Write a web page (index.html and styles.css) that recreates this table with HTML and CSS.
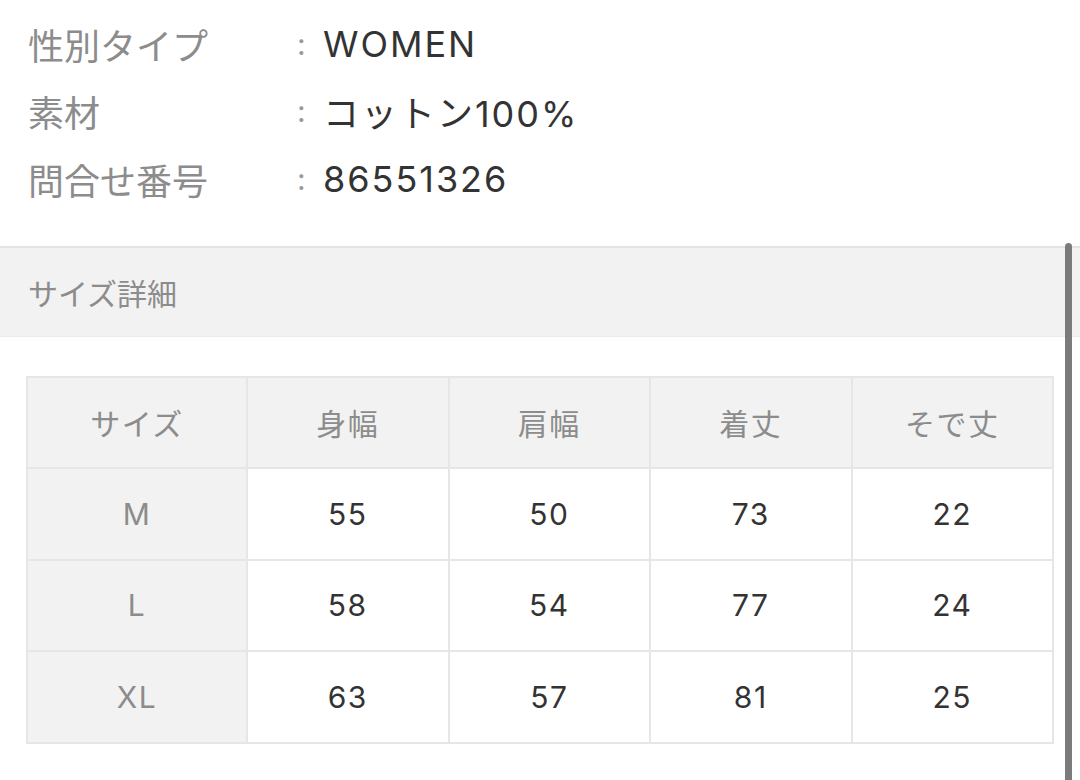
FILE: index.html
```html
<!DOCTYPE html>
<html lang="ja">
<head>
<meta charset="utf-8">
<title>商品詳細</title>
<link rel="stylesheet" href="styles.css">
</head>
<body>
<div class="page">
  <div class="specs">
    <div class="spec-row"><span class="spec-label">性別タイプ</span><span class="spec-sep">:</span><span class="spec-value">WOMEN</span></div>
    <div class="spec-row"><span class="spec-label">素材</span><span class="spec-sep">:</span><span class="spec-value">コットン100%</span></div>
    <div class="spec-row"><span class="spec-label">問合せ番号</span><span class="spec-sep">:</span><span class="spec-value">86551326</span></div>
  </div>
  <div class="section-band">サイズ詳細</div>
  <table class="size-table">
    <colgroup><col class="col-first"><col><col><col><col></colgroup>
    <thead>
      <tr><th>サイズ</th><th>身幅</th><th>肩幅</th><th>着丈</th><th>そで丈</th></tr>
    </thead>
    <tbody>
      <tr><th>M</th><td>55</td><td>50</td><td>73</td><td>22</td></tr>
      <tr><th>L</th><td>58</td><td>54</td><td>77</td><td>24</td></tr>
      <tr><th>XL</th><td>63</td><td>57</td><td>81</td><td>25</td></tr>
    </tbody>
  </table>
  <div class="scrollbar"></div>
</div>
</body>
</html>
```
FILE: styles.css
```css
html, body {
  margin: 0;
  padding: 0;
  background: #ffffff;
}
body {
  font-family: "Inter", "Noto Sans CJK JP", sans-serif;
  color: #333333;
}
.page {
  position: relative;
  width: 1080px;
  height: 780px;
  overflow: hidden;
}
.specs {
  padding: 10px 0 0 28px;
}
.spec-row {
  display: flex;
  align-items: center;
  height: 67.5px;
  font-size: 36px;
}
.spec-label {
  width: 269px;
  color: #8c8c8c;
}
.spec-sep {
  width: 26px;
  color: #9a9a9a;
  font-size: 30px;
}
.spec-value {
  color: #333333;
  letter-spacing: 0.055em;
}
.section-band {
  margin-top: 33px;
  height: 88px;
  border-top: 2px solid #e4e4e4;
  border-bottom: 1px solid #ebebeb;
  background: #f2f2f2;
  box-sizing: content-box;
  display: flex;
  align-items: center;
  padding-left: 28px;
  font-size: 30px;
  color: #8c8c8c;
}
.size-table {
  margin: 39px 0 0 26px;
  width: 1028px;
  border-collapse: collapse;
  table-layout: fixed;
  font-size: 30px;
}
.size-table .col-first {
  width: 220px;
}
.size-table th,
.size-table td {
  border: 2px solid #e6e6e6;
  height: 89.5px;
  padding: 0;
  text-align: center;
  vertical-align: middle;
  font-weight: normal;
  letter-spacing: 0.05em;
}
.size-table thead th,
.size-table tbody th {
  background: #f2f2f2;
  color: #8c8c8c;
}
.size-table td {
  background: #ffffff;
  color: #333333;
}
.scrollbar {
  position: absolute;
  top: 243px;
  right: 8px;
  width: 7px;
  bottom: 0;
  background: #7b7b7b;
  border-radius: 4px 4px 0 0;
}
```
